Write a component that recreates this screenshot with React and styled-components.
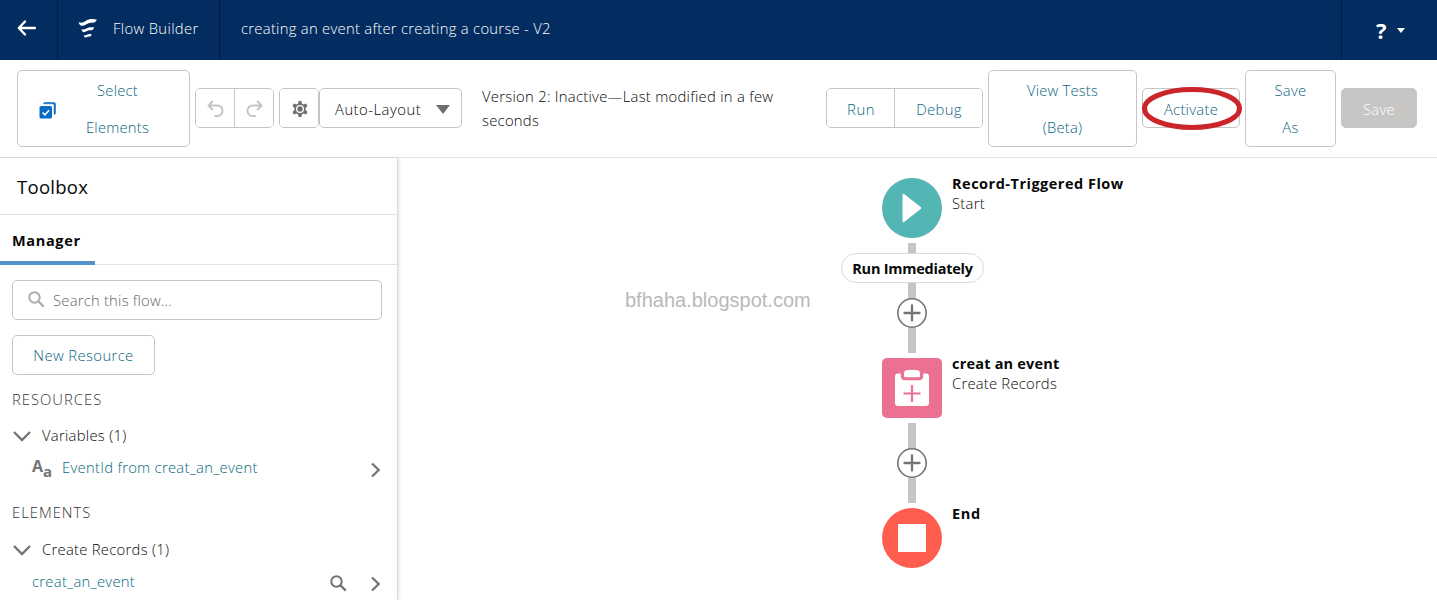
import React from "react";
import styled, { createGlobalStyle, css } from "styled-components";

const Global = createGlobalStyle`
  *, *::before, *::after { box-sizing: border-box; }
  html, body { margin: 0; padding: 0; overflow: hidden; }
  body { font-family: "Open Sans", "Noto Sans", sans-serif; font-size: 14.8px; color: #080808; background: #fff; }
  button { font: inherit; margin: 0; }
  svg { display: block; flex: none; }
`;

const Page = styled.div`
  width: 1437px;
  height: 600px;
  display: flex;
  flex-direction: column;
  overflow: hidden;
  position: relative;
`;

const Label = styled.span`
  white-space: pre;
  font-weight: ${(p) => p.$weight || (p.$bold ? 700 : 360)};
  font-size: ${(p) => p.$size || (p.$bold ? 14.5 : 14.8)}px;
  letter-spacing: ${(p) => p.$ls ?? 0.28}px;
`;

const Header = styled.header`
  height: 60px;
  flex: none;
  display: flex;
  background: #032d60;
  color: #fff;
`;

const HeaderCell = styled.div`
  width: ${(p) => (p.$w ? p.$w + "px" : "auto")};
  flex: ${(p) => (p.$w ? "none" : 1)};
  display: flex;
  align-items: center;
  gap: ${(p) => p.$gap || 0}px;
  padding: 0 0 4px ${(p) => p.$pl}px;
  border-right: ${(p) => (p.$last ? 0 : 1)}px solid #021c45;
`;

const HelpMark = styled.span`
  font: 700 22px/22px "Open Sans", sans-serif;
  padding-top: 3px;
`;

const Caret = styled.span`
  margin-top: 5px;
  border: 4px solid transparent;
  border-top: 5px solid #fff;
  border-bottom: 0;
`;

const Toolbar = styled.div`
  height: 98px;
  flex: none;
  display: flex;
  align-items: center;
  gap: 5px;
  padding: 0 20px 0 17px;
  border-bottom: 1px solid #e2e2e2;
`;

const boxed = css`
  border: 1px solid #c5c5c5;
  border-radius: 5px;
  background: #fff;
`;

const Button = styled.button`
  ${boxed}
  width: ${(p) => p.$w}px;
  height: ${(p) => (p.$tall ? 77 : 40)}px;
  flex: none;
  display: flex;
  align-items: center;
  justify-content: center;
  text-align: center;
  line-height: 37px;
  padding: ${(p) => (p.$tall ? "0" : "3px")} 0 0;
  color: #0b6580;
  ${(p) => p.$disabled && css`background: #c7c6c5; border-color: #c7c6c5; color: #fff;`}
`;

const SelectButton = styled(Button)`
  justify-content: flex-start;
  gap: 30px;
  padding: 0 0 0 21px;

  svg { margin-top: 3px; }
`;

const NewResourceButton = styled(Button)`
  padding-top: 0;
`;

const TwoLines = styled.span`
  display: flex;
  flex-direction: column;
  align-items: center;
`;

const Group = styled.div`
  ${boxed}
  height: 40px;
  flex: none;
  display: flex;
  overflow: hidden;
`;

const GroupButton = styled.button`
  width: ${(p) => p.$w}px;
  height: 38px;
  border: 0;
  border-left: ${(p) => (p.$divided ? "1px solid #c5c5c5" : "0")};
  background: #fff;
  color: #0b6580;
  display: flex;
  align-items: center;
  justify-content: center;
  padding: 2px 0 0 1px;
`;

const Combo = styled.div`
  ${boxed}
  width: 143px;
  height: 40px;
  flex: none;
  display: flex;
  align-items: center;
  justify-content: space-between;
  padding: 2px 11px 0 15px;
`;

const ComboArrow = styled.span`
  border: 7px solid transparent;
  border-top: 9px solid #706e6b;
  border-bottom: 0;
`;

const Joined = styled.div`
  display: flex;
  flex: none;
`;

const Short = styled.div`
  display: flex;
  gap: 5px;
  flex: none;
  padding-bottom: 1px;
`;

const Version = styled.div`
  flex: 1;
  display: flex;
  flex-direction: column;
  line-height: 24px;
  padding: 0 0 1px 15px;
`;

const Marked = styled.div`
  position: relative;
  flex: none;
  padding-bottom: 1px;
`;

const Ellipse = styled.svg`
  position: absolute;
  left: -1px;
  top: -2px;
  pointer-events: none;
`;

const Body = styled.div`
  flex: 1;
  display: flex;
  min-height: 0;
`;

const Sidebar = styled.aside`
  width: 398px;
  flex: none;
  border-right: 1px solid #dcdcdc;
  box-shadow: 1px 0 3px rgba(0, 0, 0, 0.12);
`;

const SideTitle = styled.div`
  height: 57px;
  border-bottom: 1px solid #e2e2e2;
  display: flex;
  align-items: center;
  padding: 0 0 0 17px;
`;

const Tabs = styled.div`
  height: 50px;
  border-bottom: 1px solid #e2e2e2;
  display: flex;
`;

const Tab = styled.div`
  width: 95px;
  height: 50px;
  border-bottom: 4px solid #5592cc;
  padding: 4px 0 0 12px;
  display: flex;
  align-items: center;
`;

const SideBody = styled.div`
  padding: 15px 15px 0 12px;
  display: flex;
  flex-direction: column;
  align-items: flex-start;
`;

const Search = styled.div`
  ${boxed}
  width: 370px;
  height: 40px;
  margin-bottom: 15px;
  display: flex;
  align-items: center;
  gap: 8px;
  padding-left: 15px;
  color: #666;
`;

const SectionTitle = styled.div`
  height: 20px;
  margin-top: ${(p) => p.$mt}px;
  color: #333;
  line-height: 20px;
`;

const TreeRow = styled.div`
  width: 370px;
  height: 20px;
  margin-top: ${(p) => p.$mt}px;
  padding-left: ${(p) => p.$pl || 0}px;
  display: flex;
  align-items: center;
  gap: 10px;
  color: ${(p) => (p.$link ? "#04697b" : "#080808")};
`;

const RowLabel = styled(Label)`
  padding-bottom: 2px;
`;

const Actions = styled.div`
  margin-left: auto;
  display: flex;
  align-items: center;
  gap: 23px;
  padding: 3px 1px 0 0;
`;

const TextType = styled.span`
  display: flex;
  width: 20px;
  margin: 1px 0 0 0;
  color: #747474;
  font-weight: 700;
  line-height: 14px;
  font-size: 16px;
`;

const SubLetter = styled.span`
  padding-top: 5px;
  font-size: 15px;
`;

const Canvas = styled.main`
  flex: 1;
  position: relative;
`;

const Node = styled.div`
  position: absolute;
  left: 484px;
  top: ${(p) => p.$y}px;
  display: flex;
  gap: 10px;
`;

const NodeIcon = styled.div`
  width: 60px;
  height: 60px;
  border-radius: ${(p) => (p.$square ? "5px" : "50%")};
  background: ${(p) => p.$color};
  display: flex;
  align-items: center;
  justify-content: center;
`;

const NodeText = styled.div`
  display: flex;
  flex-direction: column;
  line-height: 20px;
  margin-top: -4px;
`;

const NodeKind = styled(Label)`
  margin-top: -1px;
`;

const Connector = styled.div`
  position: absolute;
  left: 510px;
  width: 8px;
  top: ${(p) => p.$y}px;
  height: ${(p) => p.$h}px;
  background: #c7c6c5;
`;

const Pill = styled.div`
  position: absolute;
  left: 443px;
  top: 95px;
  width: 143px;
  height: 30px;
  border: 1px solid #dddbda;
  border-radius: 15px;
  background: #fff;
  display: flex;
  align-items: center;
  justify-content: center;
`;

const AddButton = styled.div`
  position: absolute;
  left: 499px;
  top: ${(p) => p.$y}px;
`;

const Watermark = styled.div`
  position: absolute;
  left: 625px;
  top: 288px;
  font: 20px/24px "Liberation Sans", Arial, sans-serif;
  color: #b9b9b9;
  white-space: nowrap;
`;

const BackIcon = () => (
  <svg width="20" height="16" viewBox="0 0 20 16" fill="none" stroke="#fff" strokeWidth="2.3" strokeLinecap="round" strokeLinejoin="round">
    <path d="M8 1.5 1.8 8 8 14.5M2 8h16" />
  </svg>
);

const FlowIcon = () => (
  <svg width="20" height="21" viewBox="0 0 20 21" fill="#fff">
    <path d="M.6 4.200C3 5.200 5.200 4.600 7.600 3 10.800.9 14.500.6 18.800 1.600 17.800 4.400 16.200 5 13.800 4.700c-2.600-.3-4.200.8-6.200 2.100C4.600 8.700 1.600 8.200.6 4.200Z" />
    <path d="M3.400 11.300c1.800.6 3.300.3 5-.8 2.300-1.500 4.800-1.700 7.800-.9-.7 2.200-1.900 2.900-3.600 2.700-1.900-.2-3.100.4-4.600 1.300-2.100 1.300-4 .8-4.600-2.300Z" />
    <path d="M5.800 17.300c1.200.3 2 .1 3.100-.6 1.400-.8 2.800-.8 4.700-.3-.5 1.800-1.300 2.400-2.500 2.200-1.100-.2-1.700.2-2.500.6-1.400.8-2.400.1-2.800-1.900Z" />
  </svg>
);

const SelectIcon = () => (
  <svg width="17" height="17" viewBox="0 0 17 17">
    <path d="M4.500 1.800C4.700.8 5.300.5 6.200.5h8.600c1 0 1.700.7 1.700 1.700v8.600c0 .9-.4 1.500-1.400 1.700V3.300c0-.9-.5-1.500-1.400-1.500Z" fill="#0b6cc4" stroke="#0b6cc4" strokeWidth=".6" />
    <rect x=".5" y="4" width="12.500" height="12.500" rx="1.500" fill="#0b6cc4" />
    <path d="m3.600 10.500 2.300 2.300 4.200-4.600" fill="none" stroke="#fff" strokeWidth="1.500" />
  </svg>
);

const UndoIcon = ({ flip }) => (
  <svg width="17" height="18" viewBox="0 0 17 18" fill="none" stroke="#c5c5c5" strokeWidth="2" strokeLinecap="round" strokeLinejoin="round">
    <g transform={flip ? "translate(17 0) scale(-1 1)" : undefined}>
      <path d="M5.300 1.500 1.500 5.500l3.800 4M2 5.500h8.500a5 5 0 0 1 5 5.200 5 5 0 0 1-5 5.300H8" />
    </g>
  </svg>
);

const GearIcon = () => (
  <svg width="18" height="18" viewBox="0 0 18 18" fill="none">
    <path
      d="M7.600 1h2.800l.5 2.500 1.700 1 2.500-.9 1.400 2.500-1.900 1.700v2.400l1.900 1.700-1.400 2.500-2.500-.9-1.700 1-.5 2.500H7.600l-.5-2.500-1.700-1-2.500.9-1.400-2.500 1.900-1.700V7.800L1.500 6.100l1.400-2.500 2.500.9 1.700-1Z"
      fill="#706e6b"
    />
    <circle cx="9" cy="9" r="4" fill="#fff" />
    <circle cx="9" cy="9" r="2.700" fill="#706e6b" />
  </svg>
);

const SearchIcon = ({ color }) => (
  <svg width="17" height="18" viewBox="0 0 17 18" fill="none" stroke={color} strokeWidth="2">
    <circle cx="6.500" cy="6.500" r="5.200" />
    <path d="m10.400 10.400 5.400 5.200" strokeWidth="2.300" />
  </svg>
);

const ChevronDown = () => (
  <svg width="20" height="12" viewBox="0 0 20 12" fill="none" stroke="#747474" strokeWidth="2.400">
    <path d="m2 2 8 8 8-8" />
  </svg>
);

const ChevronRight = () => (
  <svg width="11" height="16" viewBox="0 0 11 16" fill="none" stroke="#747474" strokeWidth="2.300">
    <path d="m2 1.500 6.700 6.500L2 14.500" />
  </svg>
);

const PlusIcon = () => (
  <svg width="30" height="30" viewBox="0 0 30 30" stroke="#747474">
    <circle cx="15" cy="15" r="14.200" fill="#fff" strokeWidth="1.600" />
    <path d="M15 7.500v15M7.500 15h15" strokeWidth="2.300" strokeLinecap="round" />
  </svg>
);

const PlayIcon = () => (
  <svg width="20" height="30" viewBox="0 0 20 30">
    <path d="M1.500 1.700v26.600L18.300 15Z" fill="#fff" stroke="#fff" strokeWidth="2" strokeLinejoin="round" />
  </svg>
);

const ClipboardIcon = () => (
  <svg width="36" height="38" viewBox="0 0 36 38">
    <path d="M4 4.500h2.800v2.200c0 3 1.500 4.500 4.200 4.500h14c2.700 0 4.200-1.500 4.200-4.500V4.500H32c2 0 3 1 3 3V34c0 2-1 3-3 3H4c-2 0-3-1-3-3V7.500c0-2 1-3 3-3Z" fill="#fff" />
    <path d="M13.500 1h9c2.400 0 3.500 1.500 3.500 3.500v2.300c0 1-.5 1.500-1.500 1.500h-13C10.500 8.300 10 7.800 10 6.800V4.500C10 2.500 11.100 1 13.500 1Z" fill="#fff" />
    <path d="M18 16v17M9.500 24.500h17" stroke="#eb7092" strokeWidth="2.200" />
  </svg>
);

const StopIcon = () => (
  <svg width="28" height="28" viewBox="0 0 28 28">
    <rect width="28" height="28" rx=".5" fill="#fff" />
  </svg>
);

export default function App() {
  return (
    <Page>
      <Global />
      <Header>
        <HeaderCell $w={58} $pl={17}><BackIcon /></HeaderCell>
        <HeaderCell $w={162} $pl={20} $gap={15}>
          <FlowIcon />
          <Label $ls={0.35}>Flow Builder</Label>
        </HeaderCell>
        <HeaderCell $pl={21}><Label>creating an event after creating a course - V2</Label></HeaderCell>
        <HeaderCell $w={95} $pl={34} $gap={10} $last>
          <HelpMark>?</HelpMark>
          <Caret />
        </HeaderCell>
      </Header>

      <Toolbar>
        <SelectButton $w={173} $tall>
          <SelectIcon />
          <TwoLines><Label $ls={0.2}>Select</Label><Label $ls={0.2}>Elements</Label></TwoLines>
        </SelectButton>
        <Short>
          <Group>
            <GroupButton $w={38}><UndoIcon /></GroupButton>
            <GroupButton $w={39} $divided><UndoIcon flip /></GroupButton>
          </Group>
          <Joined>
            <Group><GroupButton $w={38}><GearIcon /></GroupButton></Group>
            <Combo><Label $ls={0.5}>Auto-Layout</Label><ComboArrow /></Combo>
          </Joined>
        </Short>
        <Version>
          <Label>Version 2: Inactive—Last modified in a few</Label>
          <Label>seconds</Label>
        </Version>
        <Short>
          <Group>
            <GroupButton $w={67}><Label $ls={0.5}>Run</Label></GroupButton>
            <GroupButton $w={88} $divided><Label $ls={0.3}>Debug</Label></GroupButton>
          </Group>
        </Short>
        <Button $w={149} $tall><TwoLines><Label $ls={0.2}>View Tests</Label><Label $ls={0.2}>(Beta)</Label></TwoLines></Button>
        <Marked>
          <Button $w={98}><Label>Activate</Label></Button>
          <Ellipse width="102" height="44" viewBox="0 0 102 44">
            <ellipse cx="51" cy="22.500" rx="47.500" ry="19" fill="none" stroke="#cb252b" strokeWidth="5" />
          </Ellipse>
        </Marked>
        <Button $w={91} $tall><TwoLines><Label>Save</Label><Label>As</Label></TwoLines></Button>
        <Short><Button $w={76} $disabled><Label $ls={0.3}>Save</Label></Button></Short>
      </Toolbar>

      <Body>
        <Sidebar>
          <SideTitle><Label $size={18.5} $weight={400}>Toolbox</Label></SideTitle>
          <Tabs><Tab><Label $bold $ls={0.65}>Manager</Label></Tab></Tabs>
          <SideBody>
            <Search>
              <SearchIcon color="#aeaeae" />
              <Label $ls={0.22}>Search this flow...</Label>
            </Search>
            <NewResourceButton $w={143}><Label $ls={0.4}>New Resource</Label></NewResourceButton>
            <SectionTitle $mt={14}><Label $ls={1}>RESOURCES</Label></SectionTitle>
            <TreeRow $mt={17}><ChevronDown /><RowLabel>Variables (1)</RowLabel></TreeRow>
            <TreeRow $mt={12} $pl={20} $link>
              <TextType>A<SubLetter>a</SubLetter></TextType>
              <RowLabel>EventId from creat_an_event</RowLabel>
              <Actions><ChevronRight /></Actions>
            </TreeRow>
            <SectionTitle $mt={24}><Label $ls={1}>ELEMENTS</Label></SectionTitle>
            <TreeRow $mt={18}><ChevronDown /><RowLabel>Create Records (1)</RowLabel></TreeRow>
            <TreeRow $mt={12} $pl={20} $link>
              <RowLabel>creat_an_event</RowLabel>
              <Actions><SearchIcon color="#747474" /><ChevronRight /></Actions>
            </TreeRow>
          </SideBody>
        </Sidebar>

        <Canvas>
          <Connector $y={85} $h={110} />
          <Connector $y={265} $h={80} />
          <Node $y={20}>
            <NodeIcon $color="#54b5b5"><PlayIcon /></NodeIcon>
            <NodeText><Label $bold $ls={0.5}>Record-Triggered Flow</Label><NodeKind>Start</NodeKind></NodeText>
          </Node>
          <Pill><Label $bold $ls={-0.25}>Run Immediately</Label></Pill>
          <AddButton $y={140}><PlusIcon /></AddButton>
          <Node $y={200}>
            <NodeIcon $square $color="#eb7092"><ClipboardIcon /></NodeIcon>
            <NodeText><Label $bold $ls={0.2}>creat an event</Label><NodeKind $ls={0.22}>Create Records</NodeKind></NodeText>
          </Node>
          <AddButton $y={290}><PlusIcon /></AddButton>
          <Node $y={350}>
            <NodeIcon $color="#ff5d4d"><StopIcon /></NodeIcon>
            <NodeText><Label $bold $ls={0.7}>End</Label></NodeText>
          </Node>
        </Canvas>
      </Body>
      <Watermark>bfhaha.blogspot.com</Watermark>
    </Page>
  );
}
